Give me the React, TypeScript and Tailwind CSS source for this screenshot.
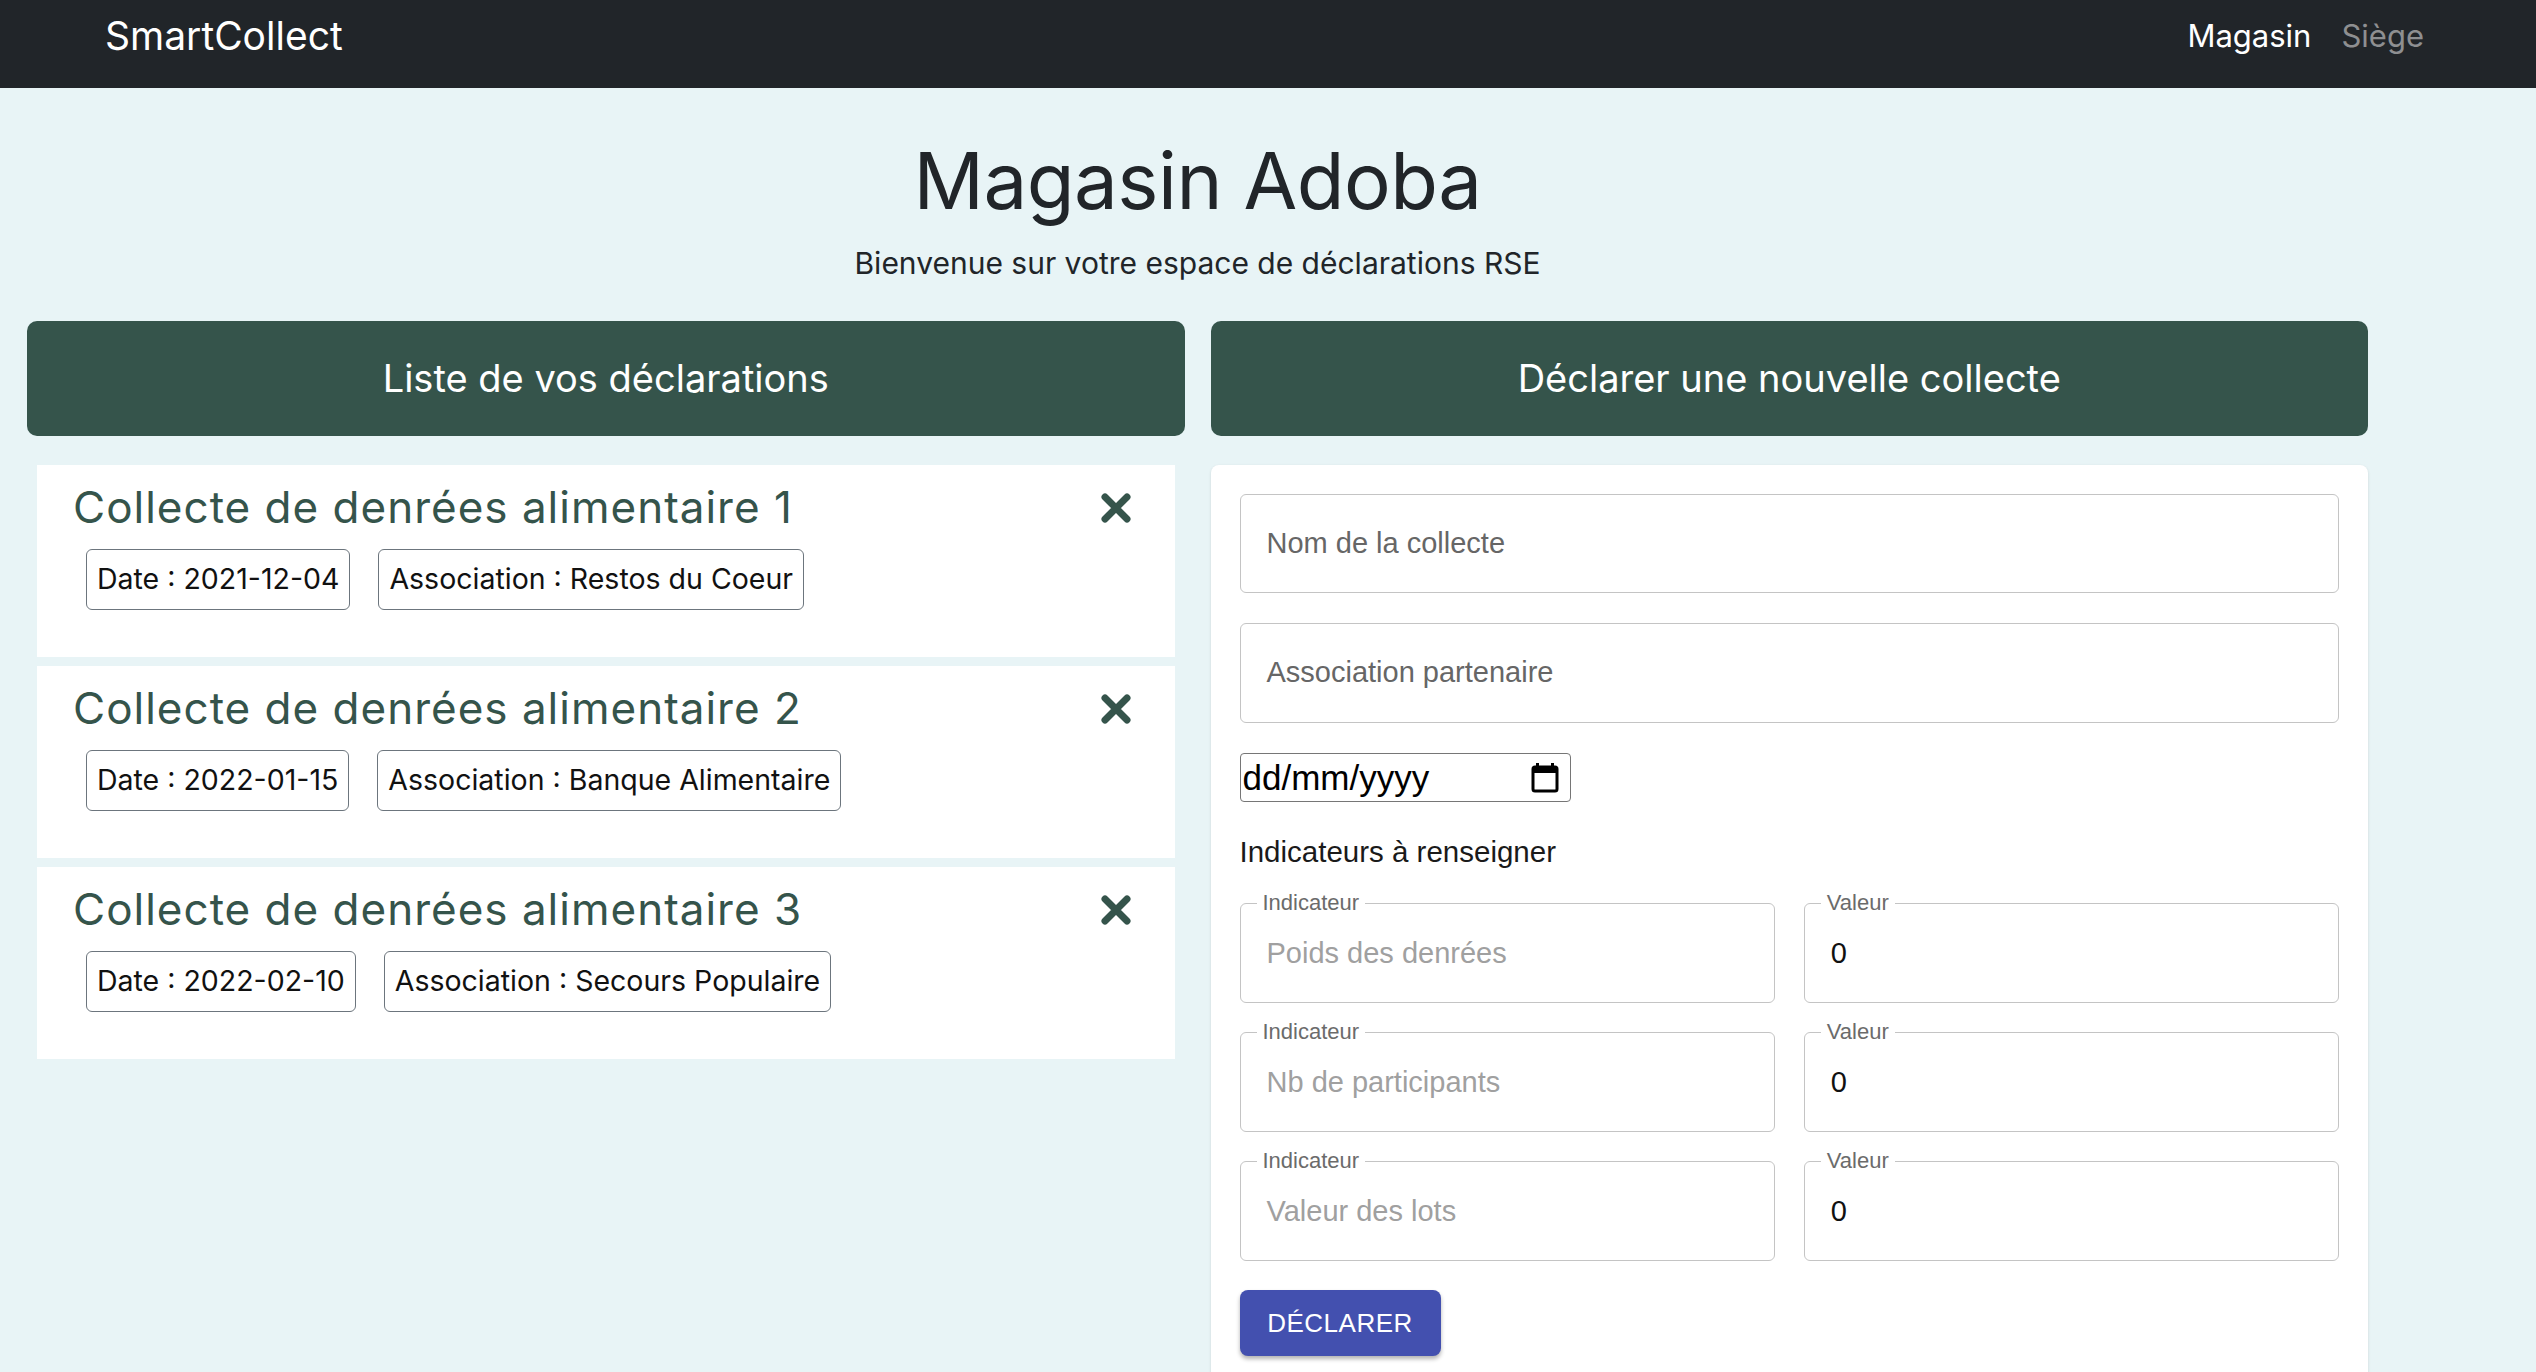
import React from 'react';

const declarations = [
  { id: 1, title: 'Collecte de denrées alimentaire 1', date: '2021-12-04', association: 'Restos du Coeur' },
  { id: 2, title: 'Collecte de denrées alimentaire 2', date: '2022-01-15', association: 'Banque Alimentaire' },
  { id: 3, title: 'Collecte de denrées alimentaire 3', date: '2022-02-10', association: 'Secours Populaire' },
];

const indicators = ['Poids des denrées', 'Nb de participants', 'Valeur des lots'];

const poppins = { fontFamily: 'Inter, "Noto Sans", sans-serif' };
const helvetica = { fontFamily: '"Liberation Sans", Arial, sans-serif' };

function CloseIcon() {
  return (
    <svg width="32" height="32" viewBox="0 0 32 32">
      <path d="M5 5 L27 27 M27 5 L5 27" stroke="#35544b" strokeWidth="7" strokeLinecap="round" />
    </svg>
  );
}

function CalendarIcon() {
  return (
    <svg width="28" height="31" viewBox="0 0 28 31">
      <rect x="2" y="5" width="24" height="24" rx="2" fill="none" stroke="#000" strokeWidth="3" />
      <rect x="2" y="5" width="24" height="6" fill="#000" />
      <rect x="5" y="1" width="3" height="6" fill="#000" />
      <rect x="20" y="1" width="3" height="6" fill="#000" />
    </svg>
  );
}

function Badge({ label }: { label: string }) {
  return (
    <div className="h-[61px] px-[10px] flex items-center border border-[#6c757d] rounded-[6px] text-[28.5px] text-[#111]">
      {label}
    </div>
  );
}

function DeclarationCard({ title, date, association }: { title: string; date: string; association: string }) {
  return (
    <div className="bg-white h-[192px] pl-[36px] pr-[43px] pt-[12px]">
      <div className="flex items-start justify-between">
        <h3 className="text-[44px] leading-[60px] text-[#35544b] tracking-[1px]">{title}</h3>
        <div className="pt-[15px]">
          <CloseIcon />
        </div>
      </div>
      <div className="flex gap-[28px] ml-[13px] mt-[12px]">
        <Badge label={`Date : ${date}`} />
        <Badge label={`Association : ${association}`} />
      </div>
    </div>
  );
}

function OutlinedField({ label, placeholder, value }: { label: string; placeholder?: string; value?: string }) {
  return (
    <div className="relative flex-1 min-w-0 h-[100px] border border-[#c4c4c4] rounded-[6px] flex items-center pl-[26px] text-[29px]">
      <span className="absolute -top-[15px] left-[16px] bg-white px-[6px] text-[22px] leading-[28px] text-[#6b6b6b]">
        {label}
      </span>
      {value !== undefined ? (
        <span className="text-[#111]">{value}</span>
      ) : (
        <span className="text-[#a0a0a0]">{placeholder}</span>
      )}
    </div>
  );
}

export default function App() {
  return (
    <div className="min-h-screen bg-[#e8f4f6]" style={poppins}>
      <nav className="h-[88px] bg-[#212529] flex items-center justify-between pl-[105px] pr-[112px] pb-[16px]">
        <span className="text-white text-[39px]">SmartCollect</span>
        <div className="flex gap-[30px] text-[31px]">
          <span className="text-white">Magasin</span>
          <span className="text-[#8e8f91]">Siège</span>
        </div>
      </nav>

      <main className="w-[2341px] ml-[27px]">
        <div className="text-center text-[#212529] pt-[48px]">
          <h1 className="text-[78px] leading-[90px] tracking-[-0.5px]">Magasin Adoba</h1>
          <p className="text-[30px] leading-[40px] mt-[17px]">Bienvenue sur votre espace de déclarations RSE</p>
        </div>

        <div className="grid grid-cols-2 gap-[26px] mt-[38px]">
          <div>
            <div className="h-[115px] rounded-[10px] bg-[#35544b] flex items-center justify-center text-white text-[38px]">
              Liste de vos déclarations
            </div>
            <div className="mx-[10px] mt-[29px] flex flex-col gap-[9px]">
              {declarations.map((d) => (
                <DeclarationCard key={d.id} title={d.title} date={d.date} association={d.association} />
              ))}
            </div>
          </div>

          <div>
            <div className="h-[115px] rounded-[10px] bg-[#35544b] flex items-center justify-center text-white text-[38px]">
              Déclarer une nouvelle collecte
            </div>
            <div className="mt-[29px] bg-white rounded-[8px] shadow-[0_1px_3px_rgba(0,0,0,0.12)] p-[29px] pb-[40px]" style={helvetica}>
              <div className="h-[99px] border border-[#c4c4c4] rounded-[6px] flex items-center pl-[26px] text-[29px] text-[#666]">
                Nom de la collecte
              </div>
              <div className="h-[100px] mt-[30px] border border-[#c4c4c4] rounded-[6px] flex items-center pl-[26px] text-[29px] text-[#666]">
                Association partenaire
              </div>
              <div className="mt-[30px] w-[331px] h-[49px] border border-[#767676] rounded-[4px] flex items-center justify-between pl-[2px] pr-[11px]">
                <span className="text-[35px] leading-[40px] text-black">dd/mm/yyyy</span>
                <CalendarIcon />
              </div>
              <div className="mt-[28px] text-[29.5px] text-[#1a1a1a]">Indicateurs à renseigner</div>
              <div className="mt-[29px] flex flex-col gap-[29px]">
                {indicators.map((name) => (
                  <div key={name} className="flex gap-[29px]">
                    <OutlinedField label="Indicateur" placeholder={name} />
                    <OutlinedField label="Valeur" value="0" />
                  </div>
                ))}
              </div>
              <button className="mt-[29px] w-[201px] h-[66px] rounded-[8px] bg-[#4350af] text-white text-[26px] font-medium tracking-[0.5px] shadow-[0_3px_4px_rgba(0,0,0,0.3)]">
                DÉCLARER
              </button>
            </div>
          </div>
        </div>
      </main>
    </div>
  );
}
